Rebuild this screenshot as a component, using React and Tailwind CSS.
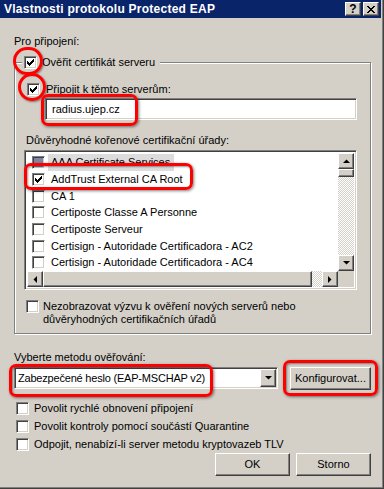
import React from 'react';

const bevelOut = 'border border-t-white border-l-white border-r-[#404040] border-b-[#404040] shadow-[inset_-1px_-1px_0_#808080]';
const sunken = 'border border-t-[#808080] border-l-[#808080] border-r-white border-b-white shadow-[inset_1px_1px_0_#404040,inset_-1px_-1px_0_#d4d0c8]';

const CHECK = [[6], [5, 6], [0, 4, 5, 6], [0, 1, 3, 4, 5], [0, 1, 2, 3, 4], [1, 2, 3], [2]];

function CheckMark() {
  return (
    <svg width="7" height="7" viewBox="0 0 7 7" shapeRendering="crispEdges">
      {CHECK.map((cols, y) => cols.map(x => <rect key={`${x}-${y}`} x={x} y={y} width="1" height="1" fill="#000" />))}
    </svg>
  );
}

function Checkbox({ checked, tinted }) {
  return (
    <div className={`w-[13px] h-[13px] shrink-0 flex items-center justify-center ${sunken} ${tinted ? 'bg-[#7d86a6]' : 'bg-white'}`}>
      {checked && <CheckMark />}
    </div>
  );
}

function Arrow({ dir }) {
  const pts = {
    up: '0,4 7,4 3.5,0.5',
    down: '0,0 7,0 3.5,3.5',
    left: '4,0 4,7 0.5,3.5',
    right: '0,0 0,7 3.5,3.5',
  }[dir];
  const vertical = dir === 'up' || dir === 'down';
  return (
    <svg width={vertical ? 7 : 4} height={vertical ? 4 : 7} viewBox={vertical ? '0 0 7 4' : '0 0 4 7'}>
      <polygon points={pts} fill="#000" />
    </svg>
  );
}

function ScrollBtn({ dir }) {
  return (
    <div className={`w-[16px] h-[16px] shrink-0 bg-[#d4d0c8] flex items-center justify-center ${bevelOut}`}>
      <Arrow dir={dir} />
    </div>
  );
}

const checker = 'bg-[repeating-conic-gradient(#ffffff_0_25%,#d4d0c8_0_50%)] bg-[length:2px_2px]';

const certs = [
  'AddTrust External CA Root',
  'CA 1',
  'Certiposte Classe A Personne',
  'Certiposte Serveur',
  'Certisign - Autoridade Certificadora - AC2',
  'Certisign - Autoridade Certificadora - AC4',
];

function Button({ children, className }) {
  return (
    <div className={`h-[23px] bg-[#d4d0c8] flex items-center justify-center ${bevelOut} ${className}`}>
      {children}
    </div>
  );
}

export default function App() {
  return (
    <div className="relative w-[384px] h-[489px] overflow-hidden bg-[#d4d0c8] text-black text-[11px] leading-[13px] font-['Liberation_Sans',Arial,sans-serif] shadow-[inset_-1px_-1px_0_#404040,inset_-2px_-2px_0_#808080]">
      {/* title bar */}
      <div className="h-[18px] mr-[3px] bg-[#0a246a] flex items-center justify-between pl-[4px] pr-[2px]">
        <span className="text-white font-bold text-[12px] tracking-[0.25px]">Vlastnosti protokolu Protected EAP</span>
        <div className="flex gap-[2px]">
          <div className={`w-[16px] h-[14px] bg-[#d4d0c8] flex items-center justify-center font-bold text-[12px] ${bevelOut}`}>?</div>
          <div className={`w-[16px] h-[14px] bg-[#d4d0c8] flex items-center justify-center ${bevelOut}`}>
            <svg width="8" height="7" viewBox="0 0 8 7" shapeRendering="crispEdges">
              <path d="M0 0h2v1H0zM6 0h2v1H6zM1 1h2v1H1zM5 1h2v1H5zM2 2h4v1H2zM3 3h2v1H3zM2 4h4v1H2zM1 5h2v1H1zM5 5h2v1H5zM0 6h2v1H0zM6 6h2v1H6z" fill="#000" />
            </svg>
          </div>
        </div>
      </div>

      <div className="pl-[14px] pr-[13px]">
        <div className="mt-[17px]">Pro připojení:</div>

        {/* group box */}
        <div className="mt-[14px] w-[357px] h-[272px] border border-[#808080] shadow-[inset_1px_1px_0_#ffffff,1px_1px_0_#ffffff]">
          <div className="-mt-[7px] ml-[7px] w-fit bg-[#d4d0c8] px-[2px] flex items-center gap-[5px] h-[13px]">
            <Checkbox checked />
            <span className="pr-[3px]">Ověřit certifikát serveru</span>
          </div>

          <div className="mt-[14px] ml-[12px] flex items-center gap-[6px] h-[13px]">
            <Checkbox checked />
            <span>Připojit k těmto serverům:</span>
          </div>

          <div className={`mt-[2px] ml-[30px] w-[312px] h-[22px] bg-white flex items-center pl-[6px] ${sunken}`}>
            radius.ujep.cz
          </div>

          <div className="mt-[14px] ml-[11px]">Důvěryhodné kořenové certifikační úřady:</div>

          {/* list box */}
          <div className={`mt-[3px] ml-[9px] w-[333px] h-[140px] bg-white flex flex-col ${sunken} p-[2px]`}>
            <div className="flex flex-1 min-h-0">
              <div className="flex-1 flex flex-col pl-[5px] pt-[1px]">
                <div className="h-[17px] flex items-center">
                  <Checkbox tinted />
                  <span className="ml-[3px] pl-[3px] pr-[4px] h-[17px] flex items-center bg-[#dcdcdc]">AAA Certificate Services</span>
                </div>
                {certs.map((c, i) => (
                  <div key={c} className="h-[17px] flex items-center gap-[6px]">
                    <Checkbox checked={i === 0} />
                    <span>{c}</span>
                  </div>
                ))}
              </div>
              <div className="w-[16px] flex flex-col">
                <ScrollBtn dir="up" />
                <div className={`h-[8px] bg-[#d4d0c8] ${bevelOut}`} />
                <div className={`flex-1 ${checker}`} />
                <ScrollBtn dir="down" />
              </div>
            </div>
            <div className="h-[16px] flex">
              <ScrollBtn dir="left" />
              <div className={`w-[269px] bg-[#d4d0c8] ${bevelOut}`} />
              <div className={`flex-1 ${checker}`} />
              <ScrollBtn dir="right" />
              <div className="w-[16px] bg-[#d4d0c8]" />
            </div>
          </div>

          <div className="mt-[10px] ml-[11px] flex items-start gap-[4px]">
            <Checkbox />
            <span>Nezobrazovat výzvu k ověření nových serverů nebo<br />důvěryhodných certifikačních úřadů</span>
          </div>
        </div>

        <div className="mt-[17px]">Vyberte metodu ověřování:</div>

        <div className="mt-[3px] flex items-start">
          <div className={`w-[264px] h-[22px] bg-white flex items-center justify-between pl-[3px] pr-[1px] ${sunken}`}>
            <span className="tracking-[-0.2px]">Zabezpečené heslo (EAP-MSCHAP v2)</span>
            <div className={`w-[16px] h-[18px] bg-[#d4d0c8] flex items-center justify-center ${bevelOut}`}>
              <Arrow dir="down" />
            </div>
          </div>
          <Button className="ml-[12px] w-[81px]">Konfigurovat...</Button>
        </div>

        <div className="mt-[12px] flex flex-col gap-[5px] pl-[2px]">
          {['Povolit rychlé obnovení připojení', 'Povolit kontroly pomocí součástí Quarantine', 'Odpojit, nenabízí-li server metodu kryptovazeb TLV'].map(t => (
            <div key={t} className="flex items-center gap-[5px] h-[13px]">
              <Checkbox />
              <span>{t}</span>
            </div>
          ))}
        </div>

        <div className="mt-[2px] flex justify-end gap-[6px] pr-[0px]">
          <Button className="w-[75px]">OK</Button>
          <Button className="w-[75px]">Storno</Button>
        </div>
      </div>

      {/* red annotation marks */}
      <div className="absolute left-[13px] top-[47px] w-[30px] h-[28px] rounded-full border-[3px] border-[#ff0000] shadow-[1px_1px_2px_rgba(0,0,0,0.45)]" />
      <div className="absolute left-[18px] top-[73px] w-[28px] h-[28px] rounded-full border-[3px] border-[#ff0000] shadow-[1px_1px_2px_rgba(0,0,0,0.45)]" />
      <div className="absolute left-[41px] top-[94px] w-[97px] h-[32px] rounded-[7px] border-[3px] border-[#ff0000] shadow-[1px_1px_3px_rgba(0,0,0,0.5),inset_1px_1px_2px_rgba(0,0,0,0.4)]" />
      <div className="absolute left-[24px] top-[163px] w-[169px] h-[27px] rounded-[7px] border-[3px] border-[#ff0000] shadow-[1px_1px_3px_rgba(0,0,0,0.5),inset_1px_1px_2px_rgba(0,0,0,0.4)]" />
      <div className="absolute left-[9px] top-[364px] w-[204px] h-[33px] rounded-[7px] border-[3px] border-[#ff0000] shadow-[1px_1px_3px_rgba(0,0,0,0.5),inset_1px_1px_2px_rgba(0,0,0,0.4)]" />
      <div className="absolute left-[283px] top-[360px] w-[95px] h-[36px] rounded-[7px] border-[3px] border-[#ff0000] shadow-[1px_1px_3px_rgba(0,0,0,0.5),inset_1px_1px_2px_rgba(0,0,0,0.4)]" />
    </div>
  );
}
